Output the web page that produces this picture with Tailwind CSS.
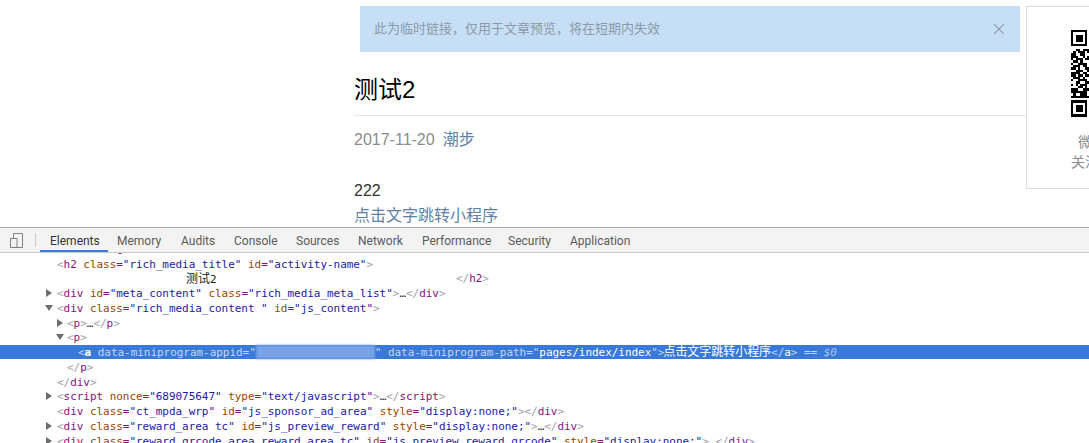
<!DOCTYPE html>
<html lang="en">
<head>
	<meta charset="UTF-8">
	<title>测试2</title>
	<script src="https://cdn.jsdelivr.net/npm/@tailwindcss/browser@4"></script>
</head>
<body class="bg-white overflow-hidden h-[443px] font-['Liberation_Sans','Noto_Sans_CJK_SC',sans-serif]">

	<!-- Article preview -->
	<div class="h-[227px] overflow-hidden flex pl-[354px] pt-[6px]">
		<div class="w-[672px] shrink-0">
			<div class="ml-[6px] w-[660px] h-[46px] bg-[#c6dff6] flex items-center justify-between pl-[14px] pr-[16px]">
				<span class="text-[13px] text-[#8c9aa6]">此为临时链接，仅用于文章预览，将在短期内失效</span>
				<svg class="w-[10px] h-[10px]" viewBox="0 0 10 10"><path d="M0 0L10 10M10 0L0 10" stroke="#8e9aa5" stroke-width="1.1"/></svg>
			</div>
			<h1 class="mt-[22px] h-[41px] text-[24px] leading-[32px] text-black border-b border-[#e6e6e6] box-content">测试2</h1>
			<div class="mt-[13px] text-[16px] leading-[22px] flex gap-[8px]">
				<span class="text-[#8c8c8c]">2017-11-20</span>
				<span class="text-[#607fa6]">潮步</span>
			</div>
			<p class="mt-[28px] text-[16px] leading-[24px] text-[#333]">222</p>
			<a class="block mt-[1px] text-[16px] leading-[24px] text-[#607fa6]">点击文字跳转小程序</a>
		</div>
		<div class="w-[100px] h-[183px] shrink-0 border border-[#dcdcdc] relative">
			<svg class="absolute left-[44px] top-[23px] w-[18px] h-[88px]" viewBox="0 0 7.7 37.6" fill="none" stroke="#000" stroke-width="1" shape-rendering="crispEdges">
				<!-- finder patterns, cut by the window edge -->
				<path d="M0 .5h7M0 6.5h7M.5 0v7M6.5 0v7M2 2.5h3M2 3.5h3M2 4.5h3"/>
				<path d="M0 30.5h7M0 36.5h7M.5 30v7M6.5 30v7M2 32.5h3M2 33.5h3M2 34.5h3"/>
				<!-- data modules -->
				<path d="M2 8.5h2M5 8.5h3M1 9.5h1M3 9.5h3M7 9.5h1M0 10.5h2M4 10.5h2M0 11.5h3M5 11.5h1M7 11.5h1M0 12.5h1M2 12.5h3M6 12.5h2M1 13.5h2M4 13.5h1M0 14.5h1M3 14.5h4M1 15.5h3M5 15.5h2M0 16.5h2M3 16.5h1M6 16.5h2M2 17.5h3M7 17.5h1M0 18.5h4M5 18.5h2M0 19.5h2M3 19.5h2M6 19.5h2M1 20.5h3M5 20.5h1M0 21.5h1M3 21.5h4M2 22.5h2M6 22.5h2M0 23.5h1M2 23.5h1M4 23.5h3M3 24.5h2M6 24.5h1M0 25.5h3M5 25.5h3M0 26.5h7M1 27.5h1M4 27.5h3M0 28.5h8"/>
			</svg>
			<span class="absolute left-[51px] top-[125px] text-[14px] leading-[20px] text-[#8c8c8c]">微</span>
			<span class="absolute left-[44px] top-[145px] text-[14px] leading-[20px] text-[#8c8c8c]">关注</span>
		</div>
	</div>

	<!-- Devtools -->
	<div class="h-[216px] overflow-hidden border-t border-[#a8a8a8] bg-white">
		<div class="h-[25px] bg-[#f3f3f3] border-b border-[#cccccc] flex items-center text-[12px] text-[#5a5a5a] font-['Roboto','Liberation_Sans',sans-serif]">
			<svg class="ml-[10px] w-[14px] h-[15px]" viewBox="0 0 14 15" fill="none" stroke="#808080"><path d="M3.5 5V.5h9v14H7"/><path d="M.5 5.5h6.5v9H.5z"/></svg>
			<span class="ml-[11px] w-px h-[14px] bg-[#cccccc]"></span>
			<div class="ml-[4px] w-[68px] h-[24px] flex items-center pl-[10px] pt-[3px] border-b-2 border-[#3879d9] text-[#333]">Elements</div>
			<div class="w-[73px] pl-[9px] pt-[1px]">Memory</div>
			<div class="w-[53px] pt-[1px]">Audits</div>
			<div class="w-[62px] pt-[1px]">Console</div>
			<div class="w-[62px] pt-[1px]">Sources</div>
			<div class="w-[64px] pt-[1px]">Network</div>
			<div class="w-[86px] pt-[1px]">Performance</div>
			<div class="w-[62px] pt-[1px]">Security</div>
			<div class="pt-[1px]">Application</div>
		</div>
		<div class="flex flex-col font-['DejaVu_Sans_Mono','Noto_Sans_CJK_SC',monospace] text-[11px] tracking-[-0.04px] leading-[14.75px] whitespace-pre text-[#881280]">
			<div class="h-[4.5px] shrink-0 relative overflow-hidden"><span class="absolute left-[117px] top-[-11px]">g</span></div>
			<div class="h-[14.75px] shrink-0 pl-[57px]"><span class="text-[#a0a0a8]">&lt;</span>h2 <span class="text-[#994500]">class</span>=<span class="text-[#1a1aa6]">"rich_media_title"</span> <span class="text-[#994500]">id</span>=<span class="text-[#1a1aa6]">"activity-name"</span><span class="text-[#a0a0a8]">&gt;</span></div>
			<div class="h-[14.75px] shrink-0 pl-[186px] text-[#222] relative"><span class="text-[12px]">测试</span>2<span class="absolute left-[456px] text-[#881280]"><span class="text-[#a0a0a8]">&lt;/</span>h2<span class="text-[#a0a0a8]">&gt;</span></span></div>
			<div class="h-[14.75px] shrink-0 pl-[57px] relative"><span class="absolute left-[46px] top-[2px] border-y-[4px] border-l-[6px] border-y-transparent border-l-[#6e6e6e]"></span><span class="text-[#a0a0a8]">&lt;</span>div <span class="text-[#994500]">id</span>=<span class="text-[#1a1aa6]">"meta_content"</span> <span class="text-[#994500]">class</span>=<span class="text-[#1a1aa6]">"rich_media_meta_list"</span><span class="text-[#a0a0a8]">&gt;</span><span class="text-[#333]">…</span><span class="text-[#a0a0a8]">&lt;/</span>div<span class="text-[#a0a0a8]">&gt;</span></div>
			<div class="h-[14.75px] shrink-0 pl-[57px] relative"><span class="absolute left-[45px] top-[3px] border-x-[4px] border-t-[6px] border-x-transparent border-t-[#6e6e6e]"></span><span class="text-[#a0a0a8]">&lt;</span>div <span class="text-[#994500]">class</span>=<span class="text-[#1a1aa6]">"rich_media_content "</span> <span class="text-[#994500]">id</span>=<span class="text-[#1a1aa6]">"js_content"</span><span class="text-[#a0a0a8]">&gt;</span></div>
			<div class="h-[14.75px] shrink-0 pl-[67px] relative"><span class="absolute left-[57px] top-[2px] border-y-[4px] border-l-[6px] border-y-transparent border-l-[#6e6e6e]"></span><span class="text-[#a0a0a8]">&lt;</span>p<span class="text-[#a0a0a8]">&gt;</span><span class="text-[#333]">…</span><span class="text-[#a0a0a8]">&lt;/</span>p<span class="text-[#a0a0a8]">&gt;</span></div>
			<div class="h-[14.75px] shrink-0 pl-[67px] relative"><span class="absolute left-[56px] top-[3px] border-x-[4px] border-t-[6px] border-x-transparent border-t-[#6e6e6e]"></span><span class="text-[#a0a0a8]">&lt;</span>p<span class="text-[#a0a0a8]">&gt;</span></div>
			<div class="h-[14px] shrink-0 -mt-[1px] mb-[1.75px] pl-[78px] bg-[#3879d9] text-[#c3d7f3] leading-[14px]">&lt;<span class="text-white font-bold">a</span> data-miniprogram-appid="<span class="inline-block w-[119px] h-[14px] align-top bg-[#76a3e8] blur-[1px]"></span>" data-miniprogram-path="<span class="text-white">pages/index/index</span>"&gt;<span class="text-white text-[12px] -ml-[1px]">点击文字跳转小程序</span>&lt;/<span class="text-white">a</span>&gt; == <span class="italic text-[#a9c4ee]">$0</span></div>
			<div class="h-[14.75px] shrink-0 pl-[67px]"><span class="text-[#a0a0a8]">&lt;/</span>p<span class="text-[#a0a0a8]">&gt;</span></div>
			<div class="h-[14.75px] shrink-0 pl-[57px]"><span class="text-[#a0a0a8]">&lt;/</span>div<span class="text-[#a0a0a8]">&gt;</span></div>
			<div class="h-[14.75px] shrink-0 pl-[57px] relative"><span class="absolute left-[46px] top-[2px] border-y-[4px] border-l-[6px] border-y-transparent border-l-[#6e6e6e]"></span><span class="text-[#a0a0a8]">&lt;</span>script <span class="text-[#994500]">nonce</span>=<span class="text-[#1a1aa6]">"689075647"</span> <span class="text-[#994500]">type</span>=<span class="text-[#1a1aa6]">"text/javascript"</span><span class="text-[#a0a0a8]">&gt;</span><span class="text-[#333]">…</span><span class="text-[#a0a0a8]">&lt;/</span>script<span class="text-[#a0a0a8]">&gt;</span></div>
			<div class="h-[14.75px] shrink-0 pl-[57px]"><span class="text-[#a0a0a8]">&lt;</span>div <span class="text-[#994500]">class</span>=<span class="text-[#1a1aa6]">"ct_mpda_wrp"</span> <span class="text-[#994500]">id</span>=<span class="text-[#1a1aa6]">"js_sponsor_ad_area"</span> <span class="text-[#994500]">style</span>=<span class="text-[#1a1aa6]">"display:none;"</span><span class="text-[#a0a0a8]">&gt;&lt;/</span>div<span class="text-[#a0a0a8]">&gt;</span></div>
			<div class="h-[14.75px] shrink-0 pl-[57px] relative"><span class="absolute left-[46px] top-[2px] border-y-[4px] border-l-[6px] border-y-transparent border-l-[#6e6e6e]"></span><span class="text-[#a0a0a8]">&lt;</span>div <span class="text-[#994500]">class</span>=<span class="text-[#1a1aa6]">"reward_area tc"</span> <span class="text-[#994500]">id</span>=<span class="text-[#1a1aa6]">"js_preview_reward"</span> <span class="text-[#994500]">style</span>=<span class="text-[#1a1aa6]">"display:none;"</span><span class="text-[#a0a0a8]">&gt;</span><span class="text-[#333]">…</span><span class="text-[#a0a0a8]">&lt;/</span>div<span class="text-[#a0a0a8]">&gt;</span></div>
			<div class="h-[14.75px] shrink-0 pl-[57px] relative"><span class="absolute left-[46px] top-[2px] border-y-[4px] border-l-[6px] border-y-transparent border-l-[#6e6e6e]"></span><span class="text-[#a0a0a8]">&lt;</span>div <span class="text-[#994500]">class</span>=<span class="text-[#1a1aa6]">"reward_qrcode_area reward_area tc"</span> <span class="text-[#994500]">id</span>=<span class="text-[#1a1aa6]">"js_preview_reward_qrcode"</span> <span class="text-[#994500]">style</span>=<span class="text-[#1a1aa6]">"display:none;"</span><span class="text-[#a0a0a8]">&gt;</span> <span class="text-[#a0a0a8]">&lt;/</span>div<span class="text-[#a0a0a8]">&gt;</span></div>
		</div>
	</div>
</body>
</html>
